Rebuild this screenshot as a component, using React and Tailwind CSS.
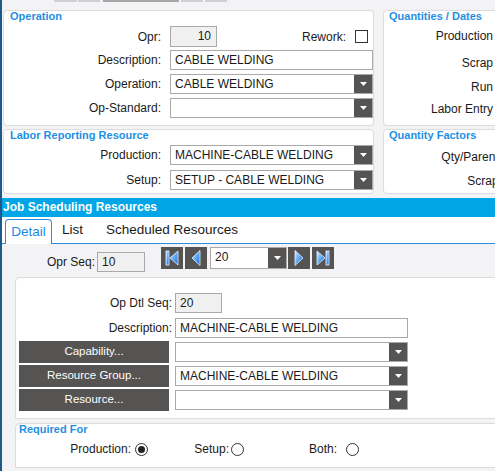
import React from "react";

const Caret = () => (
  <svg width="7" height="4" viewBox="0 0 7 4">
    <polygon points="0,0 7,0 3.5,4" fill="#ffffff" />
  </svg>
);

const Select = ({ value = "", w = "w-[203px]", h = "h-[20px]" }) => (
  <div className={`flex ${w} ${h} border border-[#a9a9a9] bg-white`}>
    <div className="flex-1 pl-[4px] leading-[18px] whitespace-nowrap overflow-hidden">{value}</div>
    <div className="w-[18px] h-full bg-[#565452] flex items-center justify-center">
      <Caret />
    </div>
  </div>
);

const Input = ({ value = "", w = "w-[203px]", h = "h-[20px]", disabled = false, right = false }) => (
  <div
    className={`${w} ${h} border border-[#a9a9a9] ${disabled ? "bg-[#f0f0f0]" : "bg-white"} ${
      right ? "text-right pr-[5px]" : "pl-[4px]"
    } leading-[18px] whitespace-nowrap overflow-hidden`}
  >
    {value}
  </div>
);

const Row = ({ label, labelW = "w-[157px]", gap = "ml-[9px]", children, h = "h-[20px]", extra }) => (
  <div className={`flex items-center ${h}`}>
    <div className={`${labelW} text-right whitespace-nowrap`}>{label}</div>
    <div className={gap}>{children}</div>
    {extra}
  </div>
);

const Title = ({ children, cls = "" }) => (
  <div className={`font-bold text-[11px] text-[#1e8fe4] whitespace-nowrap ${cls}`}>{children}</div>
);

const Grad = ({ id }) => (
  <defs>
    <linearGradient id={id} x1="0" y1="0" x2="1" y2="1">
      <stop offset="0" stopColor="#d4eaff" />
      <stop offset="0.5" stopColor="#5aa8f5" />
      <stop offset="1" stopColor="#1c68d0" />
    </linearGradient>
  </defs>
);

const NavBtn = ({ kind }) => {
  const id = `g-${kind}`;
  return (
    <div className="w-[22px] h-[22px] bg-[#565452] flex items-center justify-center">
      <svg width="22" height="22" viewBox="0 0 22 22">
        <Grad id={id} />
        {kind === "first" && (
          <>
            <rect x="5" y="4" width="3" height="14" fill={`url(#${id})`} stroke="#e6f2ff" strokeWidth="0.8" />
            <polygon points="17,4 9,11 17,18" fill={`url(#${id})`} stroke="#e6f2ff" strokeWidth="0.8" />
          </>
        )}
        {kind === "prev" && (
          <polygon points="15,3.5 7,11 15,18.5" fill={`url(#${id})`} stroke="#e6f2ff" strokeWidth="0.8" />
        )}
        {kind === "next" && (
          <polygon points="7,3.5 15,11 7,18.5" fill={`url(#${id})`} stroke="#e6f2ff" strokeWidth="0.8" />
        )}
        {kind === "last" && (
          <>
            <polygon points="5,4 13,11 5,18" fill={`url(#${id})`} stroke="#e6f2ff" strokeWidth="0.8" />
            <rect x="14" y="4" width="3" height="14" fill={`url(#${id})`} stroke="#e6f2ff" strokeWidth="0.8" />
          </>
        )}
      </svg>
    </div>
  );
};

const DarkBtn = ({ children }) => (
  <div className="w-[150px] h-[22px] bg-[#565452] text-white text-[11.5px] flex items-center justify-center">
    {children}
  </div>
);

const Radio = ({ checked }) => (
  <div className="w-[13px] h-[13px] rounded-full border border-[#333] bg-white flex items-center justify-center">
    {checked && <div className="w-[7px] h-[7px] rounded-full bg-[#222]" />}
  </div>
);

export default function App() {
  return (
    <div
      className="w-[495px] h-[471px] overflow-hidden bg-[#f3f3f5] border-l-2 border-[#1d5a8c] text-[12px] text-[#1a1a1a]"
      style={{ fontFamily: '"Liberation Sans", Arial, sans-serif' }}
    >
      {/* top strip */}
      <div className="h-[10px] flex items-start">
        <div className="ml-[52px] w-[23px] h-[2px] bg-[#d0d0d2]" />
        <div className="ml-[1px] w-[22px] h-[2px] bg-[#d0d0d2]" />
        <div className="ml-[3px] w-[76px] h-[2px] bg-[#a6a6a6]" />
        <div className="ml-[2px] w-[22px] h-[2px] bg-[#d0d0d2]" />
        <div className="ml-[2px] w-[22px] h-[2px] bg-[#d0d0d2]" />
      </div>

      {/* upper panels */}
      <div className="flex ml-[1px] gap-[9px]">
        <div className="w-[375px] flex flex-col gap-[3px]">
          <div className="h-[116px] bg-white border border-[#dcdcdc] rounded-[4px]">
            <Title cls="h-[15px] leading-[10px] pl-[6px] pt-[0px]">Operation</Title>
            <Row
              label="Opr:"
              h="h-[21px]"
              extra={
                <div className="flex-1 flex items-center justify-end pr-[5px]">
                  <span>Rework:</span>
                  <div className="ml-[9px] w-[13px] h-[13px] border border-[#333] bg-white" />
                </div>
              }
            >
              <Input value="10" w="w-[47px]" h="h-[21px]" disabled right />
            </Row>
            <div className="mt-[3px]">
              <Row label="Description:">
                <Input value="CABLE WELDING" />
              </Row>
            </div>
            <div className="mt-[4px]">
              <Row label="Operation:">
                <Select value="CABLE WELDING" />
              </Row>
            </div>
            <div className="mt-[4px]">
              <Row label="Op-Standard:">
                <Select value="" />
              </Row>
            </div>
          </div>
          <div className="h-[65px] bg-white border border-[#dcdcdc] rounded-[4px]">
            <Title cls="h-[15px] leading-[10px] pl-[6px]">Labor Reporting Resource</Title>
            <Row label="Production:">
              <Select value="MACHINE-CABLE WELDING" />
            </Row>
            <div className="mt-[5px]">
              <Row label="Setup:">
                <Select value="SETUP - CABLE WELDING" />
              </Row>
            </div>
          </div>
        </div>
        <div className="w-[140px] flex flex-col gap-[3px] shrink-0">
          <div className="h-[116px] bg-white border border-[#dcdcdc] rounded-[4px]">
            <Title cls="h-[15px] leading-[10px] pl-[5px]">Quantities / Dates</Title>
            <div className="w-[109px] text-right leading-[20px] whitespace-nowrap">Production</div>
            <div className="w-[109px] text-right leading-[20px] mt-[7px]">Scrap</div>
            <div className="w-[109px] text-right leading-[20px] mt-[4px]">Run</div>
            <div className="w-[109px] text-right leading-[20px] mt-[2px] whitespace-nowrap">Labor Entry</div>
          </div>
          <div className="h-[65px] bg-white border border-[#dcdcdc] rounded-[4px]">
            <Title cls="h-[15px] leading-[10px] pl-[5px]">Quantity Factors</Title>
            <div className="w-[118px] text-right leading-[20px] mt-[2px] whitespace-nowrap">Qty/Parent:</div>
            <div className="w-[118px] text-right leading-[20px] mt-[4px]">Scrap:</div>
          </div>
        </div>
      </div>

      {/* Job Scheduling header */}
      <div className="mt-[4px] h-[19px] bg-[#00a6e6] text-white font-bold text-[12px] leading-[19px] pl-[1px] whitespace-nowrap">
        Job Scheduling Resources
      </div>

      {/* tabs */}
      <div className="h-[27px] bg-white border-b border-[#2a8ee0] flex items-end text-[13.5px]">
        <div className="ml-[3px] w-[47px] h-[25px] -mb-[1px] bg-white border border-b-0 border-[#2a8ee0] rounded-t-[4px] text-[#1e88e5] flex items-center justify-center">
          Detail
        </div>
        <div className="ml-[10px] h-[25px] flex items-center">List</div>
        <div className="ml-[23px] h-[25px] flex items-center whitespace-nowrap">Scheduled Resources</div>
      </div>

      {/* Opr Seq row */}
      <div className="mt-[3px] flex items-start h-[25px]">
        <div className="mt-[5px] flex items-center">
          <div className="w-[93px] text-right">Opr Seq:</div>
          <div className="ml-[2px]">
            <Input value="10" w="w-[48px]" h="h-[20px]" disabled />
          </div>
        </div>
        <div className="ml-[16px] flex gap-[2px]">
          <NavBtn kind="first" />
          <NavBtn kind="prev" />
        </div>
        <div className="ml-[3px]">
          <Select value="20" w="w-[77px]" h="h-[22px]" />
        </div>
        <div className="ml-[1px] flex gap-[2px]">
          <NavBtn kind="next" />
          <NavBtn kind="last" />
        </div>
      </div>

      {/* inner detail panel */}
      <div className="mt-[5px] ml-[13px] h-[142px] bg-white border border-r-0 border-[#dcdcdc] rounded-tl-[5px] pt-[15px]">
        <Row label="Op Dtl Seq:" labelW="w-[156px]" gap="ml-[3px]">
          <Input value="20" w="w-[47px]" disabled />
        </Row>
        <div className="mt-[5px]">
          <Row label="Description:" labelW="w-[156px]" gap="ml-[3px]">
            <Input value="MACHINE-CABLE WELDING" w="w-[233px]" />
          </Row>
        </div>
        <div className="mt-[3px] flex items-center h-[22px] ml-[3px]">
          <DarkBtn>Capability...</DarkBtn>
          <div className="ml-[6px]">
            <Select value="" w="w-[233px]" />
          </div>
        </div>
        <div className="mt-[2px] flex items-center h-[22px] ml-[3px]">
          <DarkBtn>Resource Group...</DarkBtn>
          <div className="ml-[6px]">
            <Select value="MACHINE-CABLE WELDING" w="w-[233px]" />
          </div>
        </div>
        <div className="mt-[2px] flex items-center h-[22px] ml-[3px]">
          <DarkBtn>Resource...</DarkBtn>
          <div className="ml-[6px]">
            <Select value="" w="w-[233px]" />
          </div>
        </div>
      </div>

      {/* Required For */}
      <div className="mt-[4px] ml-[13px] h-[45px] bg-white border border-r-0 border-[#dcdcdc] rounded-tl-[5px]">
        <Title cls="h-[12px] leading-[10px] pl-[3px]">Required For</Title>
        <div className="mt-[3px] h-[20px] flex items-center">
          <div className="w-[115px] text-right">Production:</div>
          <div className="ml-[4px]">
            <Radio checked />
          </div>
          <div className="w-[81px] text-right">Setup:</div>
          <div className="ml-[2px]">
            <Radio />
          </div>
          <div className="w-[93px] text-right">Both:</div>
          <div className="ml-[9px]">
            <Radio />
          </div>
        </div>
      </div>
    </div>
  );
}
